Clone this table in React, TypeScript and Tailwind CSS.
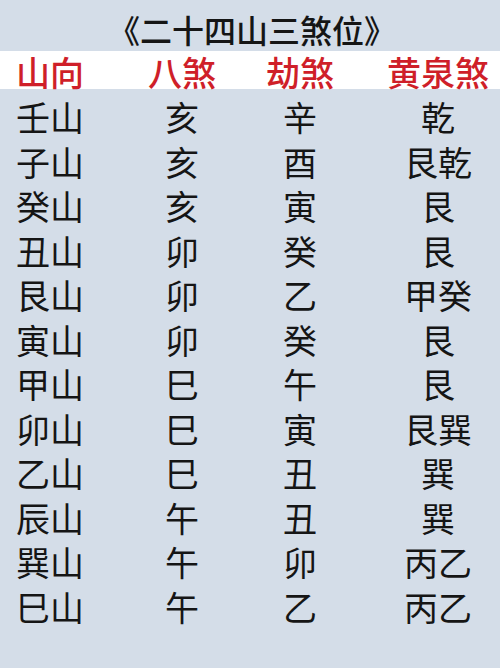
const rows: [string, string, string, string][] = [
  ["壬山", "亥", "辛", "乾"],
  ["子山", "亥", "酉", "艮乾"],
  ["癸山", "亥", "寅", "艮"],
  ["丑山", "卯", "癸", "艮"],
  ["艮山", "卯", "乙", "甲癸"],
  ["寅山", "卯", "癸", "艮"],
  ["甲山", "巳", "午", "艮"],
  ["卯山", "巳", "寅", "艮巽"],
  ["乙山", "巳", "丑", "巽"],
  ["辰山", "午", "丑", "巽"],
  ["巽山", "午", "卯", "丙乙"],
  ["巳山", "午", "乙", "丙乙"],
];

const font = { fontFamily: '"Noto Sans CJK SC", "Noto Sans", sans-serif' };

export default function App() {
  return (
    <div
      className="w-[500px] h-[668px] overflow-hidden bg-[#d4dde8] text-[#151515]"
      style={font}
    >
      {/* Title */}
      <div className="pt-[11px] pb-[4px] pl-[4px] text-center text-[32px] leading-[36px] font-medium">
        《二十四山三煞位》
      </div>

      {/* Header band */}
      <div className="h-[38px] pt-[3px] bg-white grid grid-cols-[118px_128px_108px_146px] items-center text-[34px] leading-[35px] font-medium text-[#cf1f29]">
        <div className="pl-[16px]">山向</div>
        <div className="text-center">八煞</div>
        <div className="text-center">劫煞</div>
        <div className="pl-[22px] text-center">黄泉煞</div>
      </div>

      {/* Rows */}
      <div className="mt-[6px]">
        {rows.map((r, i) => (
          <div
            key={i}
            className="grid grid-cols-[118px_128px_108px_146px] h-[44.5px] items-center text-[34px] leading-[44px]"
          >
            <div className="pl-[16px]">{r[0]}</div>
            <div className="text-center">{r[1]}</div>
            <div className="text-center">{r[2]}</div>
            <div className="pl-[22px] text-center">{r[3]}</div>
          </div>
        ))}
      </div>
    </div>
  );
}
